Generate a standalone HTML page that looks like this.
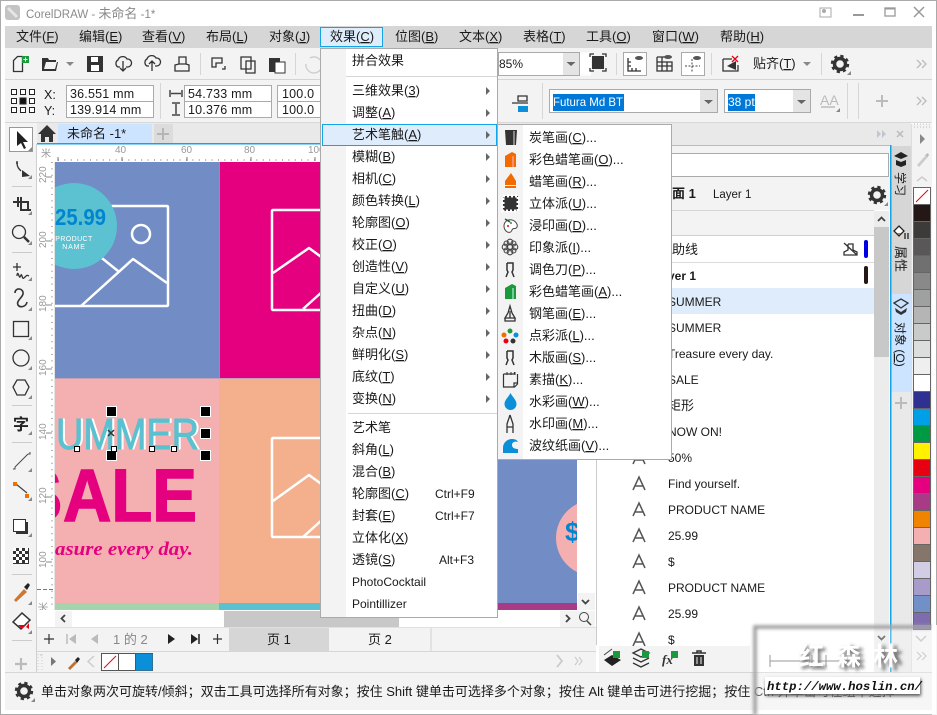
<!DOCTYPE html>
<html lang="zh"><head><meta charset="utf-8"><title>CorelDRAW</title>
<style>
html,body{margin:0;padding:0;background:#fff;width:937px;height:715px;overflow:hidden}
svg{display:block;position:absolute;left:0;top:0}
text{font-family:"Liberation Sans","Noto Sans CJK SC",sans-serif;font-size:13px;fill:#1a1a1a}
.u{text-decoration:underline}
.m text{font-size:13px}
.g{fill:#8a8a8a}
.r{font-size:10px;fill:#999}
.i{fill:none;stroke:#333;stroke-width:1.3}
.d{fill:#333}
.n{font-size:12.5px;letter-spacing:.2px}
</style></head><body>
<svg width="937" height="715" viewBox="0 0 937 715" xmlns="http://www.w3.org/2000/svg">
<defs>
<clipPath id="cv"><rect x="55" y="162" width="522" height="448"/></clipPath>
<filter id="bl" x="-20%" y="-20%" width="140%" height="140%"><feGaussianBlur stdDeviation="1.5"/></filter>
<g id="gear"><circle cx="0" cy="0" r="5.5" fill="none" stroke="#333" stroke-width="3.4"/><circle cx="0" cy="0" r="8" fill="none" stroke="#333" stroke-width="2.4" stroke-dasharray="3.2 3.1"/></g>
<path id="tri" d="M0 0l4 4-4 4z" fill="#666"/>
<path id="cor" d="M0 4l4-4v4z" fill="#888"/>
<g id="capA"><path d="M0 13L6 0 12 13M2.500 9h7" fill="none" stroke="#555" stroke-width="1.500"/></g>
</defs>

<!-- window -->
<rect width="937" height="715" fill="#fff"/>
<rect x="0.500" y="0.500" width="936" height="714" fill="none" stroke="#aaa"/>
<rect x="5" y="5" width="15" height="15" rx="3" fill="#c4c4c4"/><path d="M8 8l9 9" stroke="#e6e6e6" stroke-width="3"/>
<text x="26" y="18" style="font-size:11.5px;fill:#8a8a8a">CorelDRAW - <tspan style="font-size:13px;fill:#8a8a8a">未命名</tspan> -1*</text>
<!-- window controls -->
<g stroke="#aaa" fill="none"><rect x="820" y="8" width="11" height="9" stroke-width="1"/><circle cx="824" cy="11" r="1.500" fill="#aaa"/><rect x="853" y="14" width="11" height="2" fill="#999" stroke="none"/><rect x="885" y="8" width="10" height="8" stroke="#999" stroke-width="1.300"/><path d="M885 8.500h10" stroke="#999" stroke-width="2"/><path d="M914 7l10 10M924 7l-10 10" stroke="#999" stroke-width="1.500"/></g>

<!-- menu bar -->
<rect x="5" y="26" width="927" height="22" fill="#d6d6d6"/>
<g>
<text x="16" y="41">文件(<tspan class="u">F</tspan>)</text><text x="79" y="41">编辑(<tspan class="u">E</tspan>)</text><text x="142" y="41">查看(<tspan class="u">V</tspan>)</text><text x="206" y="41">布局(<tspan class="u">L</tspan>)</text><text x="269" y="41">对象(<tspan class="u">J</tspan>)</text>
<rect x="320.500" y="27.500" width="62" height="19" fill="#deecfb" stroke="#12a4e6"/>
<text x="330" y="41">效果(<tspan class="u">C</tspan>)</text><text x="395" y="41">位图(<tspan class="u">B</tspan>)</text><text x="459" y="41">文本(<tspan class="u">X</tspan>)</text><text x="523" y="41">表格(<tspan class="u">T</tspan>)</text><text x="586" y="41">工具(<tspan class="u">O</tspan>)</text><text x="652" y="41">窗口(<tspan class="u">W</tspan>)</text><text x="720" y="41">帮助(<tspan class="u">H</tspan>)</text>
</g>

<!-- toolbar 1 -->
<rect x="5" y="48" width="927" height="31" fill="#f3f3f3"/><rect x="5" y="79" width="927" height="1" fill="#d4d4d4"/>
<path class="i" d="M13.500 71.500v-11l4-4h5v15z"/><rect x="22" y="56" width="7" height="7" fill="#1a9a3c"/><path d="M25.500 57.500v4M23.500 59.500h4" stroke="#fff"/>
<path class="d" d="M42 71V58h6l1 2h7v2h-10l-2 7h11l2-7h1l-2 9z"/><path d="M66 62h8l-4 4z" fill="#888"/>
<path class="d" d="M87 56h16v16H87z"/><rect x="91" y="57" width="7" height="5" fill="#fff"/><rect x="91" y="65" width="8" height="6" fill="#fff"/>
<path class="i" d="M120 67h-2a4 4 0 0 1 0-7 5 5 0 0 1 9-1 4 4 0 0 1 1 8h-2M123 61v9M120 68l3 3 3-3"/>
<path class="i" d="M149 66h-2a4 4 0 0 1 0-7 5 5 0 0 1 9-1 4 4 0 0 1 1 8h-2M152 71v-9M149 64l3-3 3 3"/>
<path class="i" d="M179 64v-7h7v7M175 71v-6l4-1h7l3 1v6z"/>
<rect x="200" y="53" width="1" height="22" fill="#d6d6d6"/>
<path class="i" d="M212 58h10v5h-6v4h-4zM222 69h3v-3"/><path class="i" d="M241 57h10v12h-10zM246 61h9v12h-9z" /><path class="d" d="M269 58h11v14h-11z"/><rect x="275" y="62" width="10" height="11" fill="#fff" stroke="#333"/>
<rect x="295" y="53" width="1" height="22" fill="#d6d6d6"/>
<path d="M310 58a8 8 0 1 1-4 6" fill="none" stroke="#ccc" stroke-width="1.300"/>

<rect x="498" y="52.500" width="93" height="23" fill="#fff"/>
<rect x="563" y="53" width="17" height="22" fill="#e4e4e4"/><rect x="498.500" y="52.500" width="81" height="23" fill="none" stroke="#aaa"/><path d="M566.500 62h9l-4.500 4z" fill="#666"/>
<text x="499" y="68" style="font-size:12px">85%</text>
<path class="i" stroke-width="1.500" d="M590 57v-3h4M602 54h4v3M606 68v3h-4M594 71h-4v-3" /><rect x="592" y="56" width="12" height="13" fill="#333"/>
<rect x="616" y="53" width="1" height="22" fill="#d6d6d6"/>
<rect x="623.500" y="52.500" width="23" height="23" fill="#fff" stroke="#aaa"/><path class="i" d="M628 58v13h13M628 66h3M628 62h3M632 71v-3M636 71v-3"/><ellipse cx="639" cy="58" rx="4" ry="2" fill="#555"/>
<path class="i" d="M657 57h9M657 57v14h15v-9h-15M657 66h15M662 57v14M667 62v9"/><ellipse cx="668" cy="57" rx="4" ry="2" fill="#555"/>
<rect x="681.500" y="52.500" width="23" height="23" fill="#fff" stroke="#aaa"/><path d="M685 66h15M692 59v14" stroke="#444" stroke-dasharray="2 1.500"/><ellipse cx="697" cy="58" rx="4" ry="2" fill="#555"/>
<rect x="711" y="53" width="1" height="22" fill="#d6d6d6"/>
<path class="i" d="M723 59h9M723 59v12h15v-6"/><path class="d" d="M727 66l9-5v9z"/><path d="M732 56l6 6M738 56l-6 6" stroke="#e60012" stroke-width="1.300"/>
<text x="753" y="68">贴齐(<tspan class="u">T</tspan>)</text><path d="M803 62h8l-4 4z" fill="#888"/>
<rect x="821" y="53" width="1" height="22" fill="#d6d6d6"/>
<use href="#gear" x="840" y="64"/><use href="#cor" x="847" y="71"/>
<path d="M917 60l4 4-4 4M922 60l4 4-4 4" fill="none" stroke="#bbb" stroke-width="1.300"/>

<!-- property bar -->
<rect x="5" y="80" width="927" height="42" fill="#f3f3f3"/><rect x="5" y="122" width="927" height="1" fill="#d8d8d8"/>
<g fill="#fff" stroke="#222"><rect x="11.500" y="89.500" width="5" height="5"/><rect x="20.500" y="89.500" width="5" height="5"/><rect x="29.500" y="89.500" width="5" height="5"/><rect x="11.500" y="98.500" width="5" height="5"/><rect x="20" y="98" width="6" height="6" fill="#111"/><rect x="29.500" y="98.500" width="5" height="5"/><rect x="11.500" y="107.500" width="5" height="5"/><rect x="20.500" y="107.500" width="5" height="5"/><rect x="29.500" y="107.500" width="5" height="5"/></g>
<text x="44" y="99" style="font-size:12.5px">X:</text><text x="44" y="115" style="font-size:12.5px">Y:</text>
<g fill="#fff" stroke="#aaa"><rect x="66.500" y="85.500" width="87" height="16"/><rect x="66.500" y="101.500" width="87" height="16"/><rect x="184.500" y="85.500" width="87" height="16"/><rect x="184.500" y="101.500" width="87" height="16"/><rect x="277.500" y="85.500" width="60" height="16"/><rect x="277.500" y="101.500" width="60" height="16"/></g>
<text x="70" y="98" class="n">36.551 mm</text><text x="70" y="114" class="n">139.914 mm</text><text x="188" y="98" class="n">54.733 mm</text><text x="188" y="114" class="n">10.376 mm</text><text x="282" y="98" class="n">100.0</text><text x="282" y="114" class="n">100.0</text>
<rect x="160" y="83" width="1" height="36" fill="#d6d6d6"/>
<path d="M170 90v7M182 90v7M171 93.500h10" stroke="#444" stroke-width="1.500"/><path d="M172 103h8M172 115h8M176 104v10" stroke="#444" stroke-width="1.500"/>
<path class="i" d="M518 96h9v5h-9zM512 103h16"/><rect x="518" y="106" width="10" height="6" fill="#0a8fd8"/>
<rect x="542" y="83" width="1" height="36" fill="#d6d6d6"/>
<rect x="549.500" y="89.500" width="168" height="23" fill="#fff" stroke="#aaa"/><rect x="700" y="90" width="17" height="22" fill="#e4e4e4"/><path d="M704 100h9l-4.500 4z" fill="#666"/>
<rect x="553" y="94" width="71" height="17" fill="#0078d7"/><text x="553" y="106" style="font-size:12px;fill:#fff" textLength="70" lengthAdjust="spacingAndGlyphs">Futura Md BT</text>
<rect x="724.500" y="89.500" width="86" height="23" fill="#fff" stroke="#aaa"/><rect x="793" y="90" width="17" height="22" fill="#e4e4e4"/><path d="M797 100h9l-4.500 4z" fill="#666"/>
<rect x="728" y="94" width="27" height="17" fill="#0078d7"/><text x="728" y="106" style="font-size:12px;fill:#fff">38 pt</text>
<text x="820" y="105" style="font-size:14px;fill:#bbb">AA</text><path d="M821 107h14" stroke="#bbb" stroke-width="1.500"/><use href="#cor" x="836" y="108"/>
<rect x="847" y="83" width="1" height="36" fill="#d6d6d6"/><rect x="858" y="83" width="1" height="36" fill="#d6d6d6"/>
<path d="M876 101h12M882 95v12" stroke="#bbb" stroke-width="2"/>
<path d="M917 97l4 4-4 4M922 97l4 4-4 4" fill="none" stroke="#bbb" stroke-width="1.300"/>

<!-- tab bar -->
<rect x="5" y="123" width="885" height="21" fill="#f3f3f3"/>
<rect x="37" y="123" width="874" height="21" fill="#e9e9e9"/>
<path d="M38 134l9-9 9 9h-3v8h-4v-5h-4v5h-4v-8z" fill="#333"/>
<rect x="58" y="124" width="94" height="19" fill="#cce4ff"/>
<text x="67" y="138">未命名 -1*</text>
<rect x="154" y="124" width="19" height="19" fill="#dcdcdc"/><path d="M157 134h12M163 128v12" stroke="#b5b5b5" stroke-width="2"/>
<rect x="37" y="143" width="559" height="1.500" fill="#12a4e6"/>

<!-- left toolbox -->
<rect x="5" y="124" width="32" height="548" fill="#f3f3f3"/><rect x="36" y="144" width="1" height="528" fill="#d0d0d0"/>
<rect x="9.500" y="127.500" width="23" height="24" fill="#fff" stroke="#999"/><path d="M17 131v15l4-3 3 6 2-1-3-6h5z" fill="#222"/><use href="#cor" x="28" y="147"/>
<path class="i" d="M17 161v2c0 4 2 6 4 8"/><circle cx="17" cy="163" r="1" fill="#333"/><path class="d" d="M22 170l8 6-8 1z"/><use href="#cor" x="28" y="175"/>
<rect x="12" y="186" width="20" height="1" fill="#ccc"/>
<path d="M13 202h15v8M21 197v13h10M18 197v10" fill="none" stroke="#333" stroke-width="2"/><use href="#cor" x="28" y="211"/>
<circle cx="19" cy="232" r="6.500" fill="none" stroke="#333" stroke-width="1.300"/><path d="M24 237l5 5" stroke="#333" stroke-width="2.500"/><use href="#cor" x="28" y="241"/>
<rect x="12" y="252" width="20" height="1" fill="#ccc"/>
<path class="i" d="M13 267h8M17 263v8M17 276v-1c1-5 2 3 3 2s1-4 2-1 1 3 3 1 2-2 4-1" /><use href="#cor" x="28" y="277"/>
<path d="M15 293c0-6 9-5 8 1-1 4-7 7-5 11 2 3 8 2 9-3" fill="none" stroke="#333" stroke-width="1.600"/><use href="#cor" x="28" y="307"/>
<rect x="13.500" y="321.500" width="15" height="15" fill="none" stroke="#333" stroke-width="1.300"/><use href="#cor" x="28" y="336"/>
<circle cx="21" cy="358" r="8" fill="none" stroke="#333" stroke-width="1.300"/><use href="#cor" x="28" y="366"/>
<path class="i" d="M17 380h8l4 7-4 8h-8l-4-8z"/><use href="#cor" x="28" y="395"/>
<rect x="12" y="405" width="20" height="1" fill="#ccc"/>
<text x="13" y="430" style="font-size:16px;font-weight:bold;fill:#222">字</text><use href="#cor" x="28" y="431"/>
<rect x="12" y="442" width="20" height="1" fill="#ccc"/>
<path d="M15 467l13-13" stroke="#444" stroke-width="1"/><path d="M13 469h2v-2M28 454h2v-2" stroke="#444" fill="none"/><use href="#cor" x="28" y="468"/>
<path d="M16 484l11 9" stroke="#444" stroke-width="1.200"/><rect x="13" y="482" width="4" height="4" fill="#f07000"/><rect x="25" y="494" width="4" height="4" fill="#f07000"/><use href="#cor" x="28" y="497"/>
<rect x="13.500" y="519.500" width="12" height="12" fill="#fff" stroke="#333"/><path d="M27 522v11H16" fill="none" stroke="#333" stroke-width="2"/><use href="#cor" x="28" y="533"/>
<rect x="13" y="548" width="16" height="16" fill="#333"/><path d="M13 548h3v3h-3zM19 548h3v3h-3zM25 548h3v3h-3zM16 551h3v3h-3zM22 551h3v3h-3zM13 554h3v3h-3zM19 554h3v3h-3zM25 554h3v3h-3zM16 557h3v3h-3zM22 557h3v3h-3zM13 560h3v3h-3zM19 560h3v3h-3zM25 560h3v3h-3z" fill="#fff"/>
<rect x="12" y="574" width="20" height="1" fill="#ccc"/>
<path d="M14 600l10-11 3 3-11 10z" fill="#d0762e"/><path d="M24 587l4-4 2 2-3 5z" fill="#222"/><use href="#cor" x="28" y="601"/>
<path d="M13 622l9-9 8 7-9 9z" fill="#fff" stroke="#333" stroke-width="1.500"/><path d="M18 625h8l-4 4z" fill="#e60012"/><path d="M26 627l3-4v6z" fill="#e60012"/><use href="#cor" x="28" y="630"/>
<rect x="12" y="640" width="20" height="1" fill="#ccc"/>
<path d="M15 664h12M21 658v12" stroke="#bbb" stroke-width="2.200"/>

<!-- rulers -->
<rect x="37" y="144.500" width="540" height="17" fill="#fff"/><rect x="37" y="144.500" width="18" height="466" fill="#fff"/>
<g class="r"><text x="115" y="153" class="r">40</text><text x="181" y="153" class="r">60</text><text x="244" y="153" class="r">80</text><text x="308" y="153" class="r">100</text></g>
<path d="M58 160h262" stroke="#666" stroke-dasharray="1 5.400"/><path d="M58 161v-4M122 161v-4M187 161v-4M251 161v-4M315 161v-4" stroke="#777"/>
<path d="M52 162v448" stroke="#666" stroke-dasharray="1 5.400"/>
<path d="M55 162v448" stroke="#ccc"/>
<path d="M46 177h6M46 241h6M46 305h6M46 369h6M46 433h6M46 497h6M46 562h6" stroke="#888"/>
<g><text class="r" transform="translate(46,183) rotate(-90)">220</text><text class="r" transform="translate(46,248) rotate(-90)">200</text><text class="r" transform="translate(46,312) rotate(-90)">180</text><text class="r" transform="translate(46,376) rotate(-90)">160</text><text class="r" transform="translate(46,440) rotate(-90)">140</text><text class="r" transform="translate(46,504) rotate(-90)">120</text><text class="r" transform="translate(46,568) rotate(-90)">100</text><text class="r" transform="translate(47,622) rotate(-90)">毫米</text></g>
<text class="r" x="41" y="157">米</text>
<path d="M37 589.500h18" stroke="#777" stroke-dasharray="4 2"/>

<!-- canvas artwork -->
<g clip-path="url(#cv)">
<rect x="55" y="162" width="164" height="216" fill="#728cc5"/>
<rect x="219" y="162" width="358" height="216" fill="#e4007f"/>
<rect x="55" y="378" width="164" height="225" fill="#f4b0b0"/>
<rect x="219" y="378" width="280" height="225" fill="#f4af8c"/>
<rect x="498" y="162" width="80" height="441" fill="#728cc5"/>
<rect x="55" y="603" width="164" height="7" fill="#a5d4ac"/><rect x="219" y="603" width="280" height="7" fill="#5bc0d0"/><rect x="498" y="603" width="80" height="7" fill="#a83b85"/>
<rect x="219" y="162" width="1" height="216" fill="#8d8cc4"/><rect x="55" y="378" width="522" height="1" fill="#c5a0b4"/>
<g fill="none" stroke="#fff" stroke-width="2.500" stroke-linejoin="round">
<path d="M40 206h127a1 1 0 0 1 1 1v98a1 1 0 0 1-1 1H40"/><circle cx="141" cy="234" r="9"/><path d="M81 306l52-47 34 24M118 271l-30-24"/>
<path d="M330 210h-57a1 1 0 0 0-1 1v98a1 1 0 0 0 1 1h57M273 273l36-25 30 22M303 309l30-27"/>
<path d="M330 438h-57a1 1 0 0 0-1 1v97a1 1 0 0 0 1 1h57M273 501l36-26 30 22M303 537l30-27"/>
</g>
<circle cx="74" cy="226" r="43" fill="#5cc1d1"/>
<text x="55" y="225" style="font-size:23px;font-weight:bold;fill:#0085d0" textLength="51" lengthAdjust="spacingAndGlyphs">25.99</text>
<text x="74" y="241" text-anchor="middle" style="font-size:7px;fill:#fff;letter-spacing:.4px">PRODUCT</text><text x="74" y="249" text-anchor="middle" style="font-size:7px;fill:#fff;letter-spacing:.8px">NAME</text>
<text x="58" y="449" style="font-size:44px;fill:#fff;stroke:#fff;stroke-width:1" textLength="143" lengthAdjust="spacingAndGlyphs">UMMER</text>
<text x="56" y="449" style="font-size:44px;fill:#5bc0d0;stroke:#5bc0d0;stroke-width:1" textLength="143" lengthAdjust="spacingAndGlyphs">UMMER</text>
<text x="13" y="521" style="font-size:74px;font-weight:bold;fill:#e4007f;stroke:#e4007f;stroke-width:1.500">S</text>
<text x="63" y="521" style="font-size:74px;font-weight:bold;fill:#e4007f;stroke:#e4007f;stroke-width:1.500" textLength="134" lengthAdjust="spacingAndGlyphs">ALE</text>
<text x="55" y="555" style="font-family:'Liberation Serif',serif;font-size:19px;font-style:italic;font-weight:bold;fill:#e4007f" textLength="138" lengthAdjust="spacingAndGlyphs">asure every day.</text>
<circle cx="594" cy="538" r="38" fill="#f4b0b0"/>
<text x="565" y="541" style="font-size:27px;font-weight:bold;fill:#0085d0">$</text>
</g>
<!-- selection handles -->
<g fill="#000" stroke="#fff"><rect x="106.500" y="406.500" width="10" height="10"/><rect x="200.500" y="406.500" width="10" height="10"/><rect x="200.500" y="428.500" width="10" height="10"/><rect x="106.500" y="450.500" width="10" height="10"/><rect x="200.500" y="450.500" width="10" height="10"/></g>
<g fill="#fff" stroke="#000"><rect x="74.500" y="446.500" width="5" height="5"/><rect x="111.500" y="446.500" width="5" height="5"/><rect x="149.500" y="446.500" width="5" height="5"/><rect x="171.500" y="446.500" width="5" height="5"/></g>
<path d="M108 430l6 6M114 430l-6 6" stroke="#333" stroke-width="1.500"/>

<!-- right of canvas -->
<rect x="577" y="162" width="19" height="448" fill="#fff"/>
<rect x="578" y="593" width="17" height="17" fill="#f3f3f3"/><path d="M582 600l3.500 3.500 3.500-3.500" fill="none" stroke="#444" stroke-width="1.800"/>
<!-- horizontal scroll -->
<rect x="37" y="610" width="559" height="17" fill="#fff"/><rect x="37" y="610" width="18" height="17" fill="#fff"/>
<rect x="55" y="611" width="17" height="16" fill="#f3f3f3"/><path d="M65 615l-3.500 3.500 3.500 3.500" fill="none" stroke="#444" stroke-width="1.800"/>
<rect x="224" y="611" width="175" height="16" fill="#c8c8c8"/>
<rect x="560" y="611" width="35" height="16" fill="#f3f3f3"/><path d="M566 615l3.500 3.500-3.500 3.500" fill="none" stroke="#444" stroke-width="1.800"/>
<circle cx="584" cy="617" r="4.500" fill="none" stroke="#444"/><path d="M587 621l4 4" stroke="#444" stroke-width="1.500"/>
<!-- page bar -->
<rect x="37" y="627" width="559" height="45" fill="#f3f3f3"/><rect x="37" y="627" width="559" height="1" fill="#e0e0e0"/><rect x="37" y="651" width="559" height="1" fill="#d6d6d6"/>
<path d="M44 639h10M49 634v10M213 639h9M217.500 634v10" stroke="#333" stroke-width="1.200"/>
<path d="M67 634v10" stroke="#bbb" stroke-width="1.500"/><path d="M76 634v10l-7-5zM98 634v10l-7-5z" fill="#bbb"/>
<text x="113" y="644" style="fill:#888">1 的 2</text>
<path d="M168 634v10l7-5zM191 634v10l7-5z" fill="#222"/><path d="M199 634v10" stroke="#222" stroke-width="1.500"/>
<rect x="229" y="628" width="100" height="23" fill="#d6d6d6"/><text x="267" y="644">页 1</text><text x="368" y="644">页 2</text><rect x="430" y="628" width="2" height="23" fill="#e2e2e2"/>
<!-- colour row -->
<circle cx="41" cy="655" r=".7" fill="#bbb"/><path d="M38 654v16M42 654v16" stroke="#ccc" stroke-dasharray="1 2"/>
<path d="M51 657v9l5-4.500z" fill="#777"/>
<path d="M68 668l7-7 2 2-7 7z" fill="#c07030"/><path d="M75 660l3-3 2 2-3 4z" fill="#222"/>
<path d="M94 656l-6 5.500 6 5.500" fill="none" stroke="#ccc" stroke-width="1.500"/>
<rect x="101.500" y="653.500" width="51" height="17" fill="#fff" stroke="#555"/><path d="M118.500 654v17" stroke="#555"/><path d="M135.500 654v17" stroke="#555"/><rect x="136" y="654" width="16.500" height="16.500" fill="#0a8fd8"/><path d="M104 668l12-12" stroke="#e60012"/>
<path d="M557 655l5 6-5 6" fill="none" stroke="#ccc" stroke-width="1.800"/><path d="M575 657l3 4-3 4M579 657l3 4-3 4" fill="none" stroke="#ccc" stroke-width="1.200"/>

<!-- docker -->
<rect x="596" y="145" width="294" height="527" fill="#fff"/><rect x="596" y="145" width="1" height="500" fill="#ccc"/>
<rect x="597" y="124" width="314" height="21" fill="#e9e9e9"/><rect x="597" y="145" width="293" height="1" fill="#bbb"/>
<path d="M877 130v8l4-4zM882 130v8l4-4z" fill="#bfc8d2"/><path d="M897 131l6 6M903 131l-6 6" stroke="#bbb" stroke-width="1.500"/>
<rect x="597" y="146" width="293" height="7" fill="#f3f3f3"/>
<rect x="597.500" y="153.500" width="291" height="23" fill="#fff" stroke="#aaa"/>
<rect x="597" y="177" width="293" height="33" fill="#f3f3f3"/><rect x="597" y="210" width="277" height="1" fill="#d6d6d6"/>
<text x="659" y="198" style="font-weight:bold">页面 1</text><text x="713" y="198" style="font-size:11.500px">Layer 1</text>
<use href="#gear" x="877" y="195"/><use href="#cor" x="884" y="202"/>
<rect x="597" y="211" width="277" height="24" fill="#f3f3f3"/><rect x="597" y="235" width="277" height="1" fill="#d0d0d0"/>
<rect x="597" y="262" width="277" height="1" fill="#dcdcdc"/>
<text x="659" y="254">辅助线</text>
<path class="i" d="M848 244v6l-4 2v3h13v-3l-4-2M848 244h5v6M844 243l13 12" stroke-width="1"/>
<rect x="864" y="240" width="4" height="18" rx="2" fill="#0000e6"/><rect x="864" y="266" width="4" height="18" rx="2" fill="#231815"/>
<text x="654" y="280" style="font-weight:bold;font-size:12px">Layer 1</text>
<rect x="597" y="288" width="277" height="26" fill="#deecfb"/>
<g style="font-size:12px">
<text x="668" y="306" style="font-size:12px">SUMMER</text><text x="668" y="332" style="font-size:12px">SUMMER</text><text x="668" y="358" style="font-size:12px">Treasure every day.</text><text x="668" y="384" style="font-size:12px">SALE</text><text x="668" y="410">矩形</text><text x="668" y="436" style="font-size:12px">NOW ON!</text><text x="668" y="462" style="font-size:12px">50%</text><text x="668" y="488" style="font-size:12px">Find yourself.</text><text x="668" y="514" style="font-size:12px">PRODUCT  NAME</text><text x="668" y="540" style="font-size:12px">25.99</text><text x="668" y="566" style="font-size:12px">$</text><text x="668" y="592" style="font-size:12px">PRODUCT  NAME</text><text x="668" y="618" style="font-size:12px">25.99</text><text x="668" y="644" style="font-size:12px">$</text>
</g>
<use href="#capA" x="633" y="451"/><use href="#capA" x="633" y="477"/><use href="#capA" x="633" y="503"/><use href="#capA" x="633" y="529"/><use href="#capA" x="633" y="555"/><use href="#capA" x="633" y="581"/><use href="#capA" x="633" y="607"/><use href="#capA" x="633" y="633"/>
<!-- docker scrollbar -->
<rect x="874" y="211" width="15" height="461" fill="#ececec"/><rect x="874" y="227" width="15" height="130" fill="#c8c8c8"/>
<path d="M878 221l3.500-3.500 3.500 3.500" fill="none" stroke="#444" stroke-width="1.800"/><path d="M878 636l3.500 3.500 3.500-3.500" fill="none" stroke="#444" stroke-width="1.800"/>
<!-- docker bottom toolbar -->
<rect x="599" y="646" width="151" height="26" fill="#f3f3f3"/>
<path d="M604 660l8-5 9 5-9 6z" fill="#222"/><path d="M604 655l8-6" stroke="#444" fill="none"/><rect x="613" y="651" width="7" height="7" fill="#1a9a3c"/>
<path class="i" d="M633 653l8-4 8 4-8 4zM633 658l8 4 8-4M633 663l8 4 8-4" stroke-width="1"/><rect x="642" y="651" width="7" height="7" fill="#1a9a3c"/>
<text x="662" y="664" style="font-family:'Liberation Serif',serif;font-style:italic;font-size:13px;font-weight:bold;fill:#333">fx</text><rect x="671" y="651" width="7" height="7" fill="#1a9a3c"/>
<path d="M692 653h14M697 653v-2h4v2" stroke="#333" stroke-width="1.500" fill="none"/><path d="M694 655h10v11h-10z" fill="#333"/><path d="M697 657v7M701 657v7" stroke="#f3f3f3"/>

<!-- vertical tabs -->
<rect x="891.500" y="145" width="19.500" height="527" fill="#e9e9e9"/>
<rect x="890" y="145" width="1.500" height="527" fill="#12a4e6"/>
<rect x="891.500" y="146" width="19.500" height="148" fill="#d6d6d6"/>
<path d="M894 156l7-4 7 4-7 3z" fill="#222"/><path d="M896 160v5l5 2 5-2v-5l-5 2z" fill="#222"/>
<text transform="translate(896,172) rotate(90)" style="font-size:12px">学习</text>
<path d="M894 231l5-5 5 5-5 5z" fill="#fff" stroke="#222" stroke-width="1.300"/><path d="M897 233h4l-2 2z" fill="#e07000"/><path d="M905 233v6M908 233v6" stroke="#222" stroke-width="1.300"/>
<text transform="translate(896,246) rotate(90)">属性</text>
<rect x="891.500" y="294" width="19.500" height="98" fill="#cce4ff"/>
<path class="i" d="M894 303l7-4 7 4-7 5z" stroke-width="1.200"/><path d="M895 308l6 4 6-4-1 4-5 3-5-3z" fill="#333"/>
<text transform="translate(896,322) rotate(90)" style="font-size:12px">对象 (<tspan class="u">O</tspan>)</text>
<path d="M895 403h12M901 397v12" stroke="#bbb" stroke-width="2"/>

<!-- palette strip -->
<rect x="911" y="124" width="21" height="548" fill="#f3f3f3"/><rect x="911" y="124" width="1" height="548" fill="#ddd"/>
<path d="M914 124h16M914 127h16" stroke="#bbb" stroke-dasharray="1 2"/>
<path d="M920 134v10l5-5z" fill="#888"/>
<path d="M917 165l8-9 2 2-8 9z" fill="#ccc"/><path d="M925 155l3-2 1 2-2 3z" fill="#bbb"/>
<path d="M917 181l5-4 5 4" fill="none" stroke="#ccc" stroke-width="1.500"/>
<g stroke="#666"><rect x="913.500" y="187.500" width="17" height="17" fill="#fff"/><rect x="913.500" y="204.500" width="17" height="17" fill="#231815"/><rect x="913.500" y="221.500" width="17" height="17" fill="#3e3a39"/><rect x="913.500" y="238.500" width="17" height="17" fill="#595757"/><rect x="913.500" y="255.500" width="17" height="17" fill="#717071"/><rect x="913.500" y="272.500" width="17" height="17" fill="#898989"/><rect x="913.500" y="289.500" width="17" height="17" fill="#9fa0a0"/><rect x="913.500" y="306.500" width="17" height="17" fill="#b5b5b6"/><rect x="913.500" y="323.500" width="17" height="17" fill="#c9caca"/><rect x="913.500" y="340.500" width="17" height="17" fill="#dcdddd"/><rect x="913.500" y="357.500" width="17" height="17" fill="#efefef"/><rect x="913.500" y="374.500" width="17" height="17" fill="#fff"/><rect x="913.500" y="391.500" width="17" height="17" fill="#2e3192"/><rect x="913.500" y="408.500" width="17" height="17" fill="#00a0e9"/><rect x="913.500" y="425.500" width="17" height="17" fill="#009944"/><rect x="913.500" y="442.500" width="17" height="17" fill="#fff100"/><rect x="913.500" y="459.500" width="17" height="17" fill="#e60012"/><rect x="913.500" y="476.500" width="17" height="17" fill="#e4007f"/><rect x="913.500" y="493.500" width="17" height="17" fill="#a83b85"/><rect x="913.500" y="510.500" width="17" height="17" fill="#f08300"/><rect x="913.500" y="527.500" width="17" height="17" fill="#f4b0b0"/><rect x="913.500" y="544.500" width="17" height="17" fill="#86766a"/><rect x="913.500" y="561.500" width="17" height="17" fill="#d0cde4"/><rect x="913.500" y="578.500" width="17" height="17" fill="#a89ac9"/><rect x="913.500" y="595.500" width="17" height="17" fill="#7290c8"/><rect x="913.500" y="612.500" width="17" height="17" fill="#7f6cb0"/></g>
<path d="M915 190l0 0M916 202l12-12" stroke="#e60012"/>
<path d="M916 636l5 5 5-5" fill="none" stroke="#bbb" stroke-width="1.500"/>
<path d="M917 652l4 4-4 4M922 652l4 4-4 4" fill="none" stroke="#bbb" stroke-width="1.200"/>
<rect x="891.500" y="0" width="0" height="0"/>

<!-- status bar -->
<rect x="5" y="672" width="927" height="1" fill="#d6d6d6"/>
<rect x="5" y="673" width="927" height="37" fill="#f3f3f3"/>
<use href="#gear" x="24" y="691"/><use href="#cor" x="31" y="698"/>
<text x="41" y="696">单击对象两次可旋转/倾斜；双击工具可选择所有对象；按住 Shift 键单击可选择多个对象；按住 Alt 键单击可进行挖掘；按住 Ctrl 并单击可在组中选择</text>
<rect x="932" y="123" width="4" height="591" fill="#fff"/>
<rect x="936" y="0" width="1" height="715" fill="#aaa"/>

<!-- main menu -->
<rect x="320.500" y="48.500" width="177" height="569" fill="#fff" stroke="#aaa"/>
<rect x="321" y="49" width="25" height="568" fill="#f3f3f3"/>
<rect x="346" y="76" width="151" height="1" fill="#d6d6d6"/><rect x="348" y="413" width="149" height="1" fill="#d6d6d6"/>
<rect x="322.500" y="124.500" width="174" height="21" fill="#deecfb" stroke="#12a4e6"/>
<g class="m">
<text x="352" y="65">拼合效果</text>
<text x="352" y="95">三维效果(<tspan class="u">3</tspan>)</text><text x="352" y="117">调整(<tspan class="u">A</tspan>)</text><text x="352" y="139">艺术笔触(<tspan class="u">A</tspan>)</text><text x="352" y="161">模糊(<tspan class="u">B</tspan>)</text><text x="352" y="183">相机(<tspan class="u">C</tspan>)</text><text x="352" y="205">颜色转换(<tspan class="u">L</tspan>)</text><text x="352" y="227">轮廓图(<tspan class="u">O</tspan>)</text><text x="352" y="249">校正(<tspan class="u">O</tspan>)</text><text x="352" y="271">创造性(<tspan class="u">V</tspan>)</text><text x="352" y="293">自定义(<tspan class="u">U</tspan>)</text><text x="352" y="315">扭曲(<tspan class="u">D</tspan>)</text><text x="352" y="337">杂点(<tspan class="u">N</tspan>)</text><text x="352" y="359">鲜明化(<tspan class="u">S</tspan>)</text><text x="352" y="381">底纹(<tspan class="u">T</tspan>)</text><text x="352" y="403">变换(<tspan class="u">N</tspan>)</text>
<text x="352" y="432">艺术笔</text><text x="352" y="454">斜角(<tspan class="u">L</tspan>)</text><text x="352" y="476">混合(<tspan class="u">B</tspan>)</text><text x="352" y="498">轮廓图(<tspan class="u">C</tspan>)</text><text x="352" y="520">封套(<tspan class="u">E</tspan>)</text><text x="352" y="542">立体化(<tspan class="u">X</tspan>)</text><text x="352" y="564">透镜(<tspan class="u">S</tspan>)</text>
<text x="352" y="586" style="font-size:12px">PhotoCocktail</text><text x="352" y="608" style="font-size:12px">Pointillizer</text>
<text x="435" y="498" style="font-size:12px">Ctrl+F9</text><text x="435" y="520" style="font-size:12px">Ctrl+F7</text><text x="439" y="564" style="font-size:12px">Alt+F3</text>
</g>
<use href="#tri" x="486" y="87"/><use href="#tri" x="486" y="109"/><use href="#tri" x="486" y="131"/><use href="#tri" x="486" y="153"/><use href="#tri" x="486" y="175"/><use href="#tri" x="486" y="197"/><use href="#tri" x="486" y="219"/><use href="#tri" x="486" y="241"/><use href="#tri" x="486" y="263"/><use href="#tri" x="486" y="285"/><use href="#tri" x="486" y="307"/><use href="#tri" x="486" y="329"/><use href="#tri" x="486" y="351"/><use href="#tri" x="486" y="373"/><use href="#tri" x="486" y="395"/>

<!-- submenu -->
<rect x="497.500" y="124.500" width="174" height="335" fill="#fff" stroke="#aaa"/>
<rect x="498" y="125" width="25" height="334" fill="#f3f3f3"/>
<g class="m">
<text x="529" y="142">炭笔画(<tspan class="u">C</tspan>)...</text><text x="529" y="164">彩色蜡笔画(<tspan class="u">O</tspan>)...</text><text x="529" y="186">蜡笔画(<tspan class="u">R</tspan>)...</text><text x="529" y="208">立体派(<tspan class="u">U</tspan>)...</text><text x="529" y="230">浸印画(<tspan class="u">D</tspan>)...</text><text x="529" y="252">印象派(<tspan class="u">I</tspan>)...</text><text x="529" y="274">调色刀(<tspan class="u">P</tspan>)...</text><text x="529" y="296">彩色蜡笔画(<tspan class="u">A</tspan>)...</text><text x="529" y="318">钢笔画(<tspan class="u">E</tspan>)...</text><text x="529" y="340">点彩派(<tspan class="u">L</tspan>)...</text><text x="529" y="362">木版画(<tspan class="u">S</tspan>)...</text><text x="529" y="384">素描(<tspan class="u">K</tspan>)...</text><text x="529" y="406">水彩画(<tspan class="u">W</tspan>)...</text><text x="529" y="428">水印画(<tspan class="u">M</tspan>)...</text><text x="529" y="450">波纹纸画(<tspan class="u">V</tspan>)...</text>
</g>
<path d="M505 130h12l-1 15h-10z" fill="#333"/><path d="M514 131v14" stroke="#ddd"/>
<path d="M505 156l7-4 4 2v13h-11z" fill="#f26a00"/><path d="M513 156v11" stroke="#fbd"/>
<path d="M511 173l5 8v4h-11v-4z" fill="#f26a00"/><rect x="505" y="186" width="11" height="2" fill="#f26a00"/>
<rect x="503" y="196" width="15" height="15" fill="#333"/><path d="M503 196h15v15h-15z" fill="none" stroke="#fff" stroke-dasharray="2 2" stroke-width="3"/>
<path d="M504 226c0-5 5-7 8-6 4 1 6 5 5 7-1 3-4 0-5 3-1 3-4 3-6 1-1-1-2-3-2-5z" fill="#fff" stroke="#444"/><path d="M505 219l5 3" stroke="#444" stroke-width="1.500"/><circle cx="508" cy="226" r="1" fill="#e60012"/><circle cx="511" cy="223" r="1" fill="#1a9a3c"/>
<g fill="none" stroke="#444" stroke-width="1.100"><circle cx="510" cy="247" r="3"/><circle cx="510" cy="242" r="2.800"/><circle cx="510" cy="252" r="2.800"/><circle cx="505" cy="247" r="2.800"/><circle cx="515" cy="247" r="2.800"/><circle cx="506.500" cy="243.500" r="2.500"/><circle cx="513.500" cy="243.500" r="2.500"/><circle cx="506.500" cy="250.500" r="2.500"/><circle cx="513.500" cy="250.500" r="2.500"/></g>
<path d="M507 263h6v7l-1 2 2 5M507 263v7l1 2-2 5" fill="none" stroke="#333" stroke-width="1.500"/>
<path d="M505 288l7-4 4 2v13h-11z" fill="#1a9a3c"/><path d="M513 288v11" stroke="#cfe"/>
<path class="i" d="M510 306l-2 7-3 5h10l-3-5zM510 311v7M505 318v3h10v-3" stroke-width="1.100"/>
<circle cx="510" cy="331" r="2.500" fill="#1a9a3c"/><circle cx="504" cy="335" r="2.500" fill="#f26a00"/><circle cx="516" cy="335" r="2.500" fill="#0a8fd8"/><circle cx="506" cy="341" r="2.500" fill="#e60012"/><circle cx="513" cy="341" r="2.500" fill="#333"/>
<path d="M507 351h6v7l-1 2 2 5M507 351v7l1 2-2 5" fill="none" stroke="#333" stroke-width="1.500"/>
<path d="M503.500 374h11v-2M503.500 374v13h11l3-3v-10M514 387v-4h4" fill="none" stroke="#333" stroke-width="1.200"/><path d="M507 372v3M511 372v3M515 372v3" stroke="#333"/>
<path d="M510.500 393c2 4 6 7 6 11a6 6 0 0 1-12 0c0-4 4-7 6-11z" fill="#0a8fd8"/>
<path class="i" d="M510 415l-3 9v9M510 415l3 9v9M507 427h6" stroke-width="1.300"/>
<path d="M503 453v-5c0-6 5-9 9-9 3 0 5 1 6 3-3-1-6 0-6 3 0 3 3 4 6 4v4z" fill="#0a8fd8"/>

<!-- watermark -->
<rect x="753" y="625" width="184" height="90" fill="#fff" fill-opacity=".28"/>
<rect x="753" y="625" width="120" height="47" fill="#fff" fill-opacity=".6"/>
<path d="M755 715V627H932" fill="none" stroke="#999" stroke-width="3.500" filter="url(#bl)"/>
<rect x="932" y="625" width="5" height="90" fill="#fff" fill-opacity=".85"/>
<path d="M770 655v12M770 661h90M812 655v12M826 655v12" stroke="#999"/>
<g filter="url(#bl)"><text x="801" y="668" style="font-size:26px;font-weight:bold;fill:#777;letter-spacing:12px">红森林</text></g>
<text x="799" y="665" style="font-size:25px;font-weight:bold;fill:#fff;letter-spacing:12px">红森林</text>
<rect x="766" y="679" width="155" height="17" fill="#555" filter="url(#bl)"/>
<rect x="765" y="677" width="155" height="17" fill="#fff"/>
<text x="767" y="690" style="font-family:'Liberation Mono',monospace;font-size:12.300px;font-style:italic;font-weight:bold;fill:#111">http://www.hoslin.cn/</text>
</svg>
</body></html>
